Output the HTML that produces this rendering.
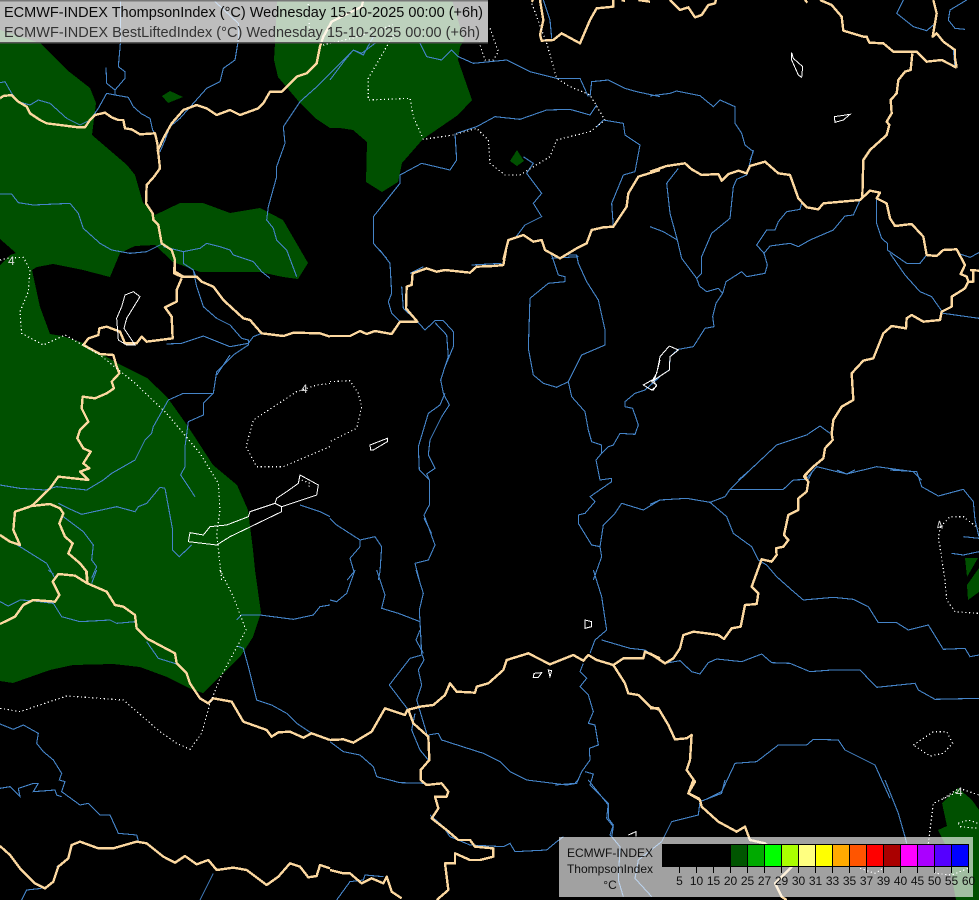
<!DOCTYPE html>
<html><head><meta charset="utf-8"><title>ECMWF-INDEX ThompsonIndex</title>
<style>
html,body{margin:0;padding:0;background:#000;width:979px;height:900px;overflow:hidden}
svg{display:block;position:absolute;left:0;top:0}
path{fill:none;vector-effect:non-scaling-stroke;shape-rendering:crispEdges}
.g path{fill:#005000;stroke:none}
.r path{stroke:#4584c8;stroke-width:1.1}
.b path{stroke:#fcd8a0;stroke-width:2.4;stroke-linejoin:round}
.w path{stroke:#fff;stroke-width:1}
.d path{stroke:#fff;stroke-width:1.2;stroke-dasharray:1.2 2.6}
text{font-family:"Liberation Sans",sans-serif}
.l{font-size:12px;fill:#ddd}
</style></head><body>
<svg width="979" height="900" viewBox="0 0 979 900" xmlns="http://www.w3.org/2000/svg">
<rect width="979" height="900" fill="#000"/>
<g class="g">
<path d="M0,30L40,43L67,70L90,88L96,103L92,135L127,165L135,175L143,203L155,215L180,203L203,203L230,213L260,208L283,220L308,263L298,279L283,277L260,272L200,272L173,262L155,245L135,246L120,253L110,277L83,270L53,264L37,267L32,270L40,307L50,334L62,336L83,343L117,363L147,378L167,397L187,425L213,465L237,485L248,510L253,550L255,570L261,613L253,637L240,657L203,693L193,690L167,677L140,667L113,664L73,665L50,670L13,683L0,681L0,265L10,255L16,253L0,239Z"/>
<path d="M277,0L452,0L464,40L460,47L458,60L472,100L458,115L423,139L402,163L398,182L382,192L366,182L367,142L353,130L340,128L330,128L315,118L300,103L278,77L274,60L275,43Z"/>
<path d="M162,96L170,91L183,97L168,103Z"/>
<path d="M510,161L517,150L524,161L517,166Z"/>
<path d="M965,558L978,558L967,577Z"/>
<path d="M968,600L967,585L979,568L979,592Z"/>
<path d="M958,788L942,803L947,826L938,830L946,846L956,900L979,900L979,810L972,800Z"/>
</g>

<!-- RIVERS -->
<g class="r">
<g transform="translate(0,40) scale(.33333)">
<path d="M0,128L15,125L35,160L55,185L90,195L115,180L150,190L200,235L240,255L270,240L295,205L320,160L345,165L385,172L400,200L425,222L450,235L458,270L470,290"/>
<path d="M318,82L320,130L345,150L375,115L375,95L355,80L362,0L362,-120"/>
<path d="M345,150L345,165"/>
<path d="M640,-120L715,-50L715,0L705,60L670,85L660,125L620,145L580,190L540,235L510,260L495,300L480,335"/>
<path d="M1125,10L1085,40L1060,30L1030,60L945,145L900,185L850,260L855,310L830,380L830,410L805,500L800,540L820,565L830,600L860,630L890,710"/>
<path d="M0,462L35,462L55,488L100,495L210,490L235,520L250,565L300,610L335,630L390,640L440,635L470,620L490,610"/>
<path d="M490,620L550,635L600,625L620,610L660,620L690,630L700,645L760,665L785,695L810,715"/>
<path d="M550,635L550,670L580,690L590,715"/>
</g>
<g transform="translate(0,250) scale(.33333)">
<path d="M500,282L545,280L610,258L690,290L745,280L760,260L785,250"/>
<path d="M580,60L590,110L610,170L650,205L690,225L725,265L745,270L745,285L700,315L650,365L640,430L610,460L610,495L565,515L555,590L555,650L542,675L585,740"/>
<path d="M690,315L650,375"/>
<path d="M640,430L550,430L505,450L460,530L455,550L435,570L405,630L335,670L310,690L260,720L170,710L135,720L60,715L0,705"/>
<path d="M495,715L480,712L440,760L415,770L405,785L350,770L245,793L205,775L175,760"/>
<path d="M495,715L518,840L518,900L538,920L575,885"/>
<path d="M190,800L250,845L280,885L275,930L290,950L275,985"/>
<path d="M0,855L60,890L140,940L165,985"/>
<path d="M900,765L960,785L990,800"/>
</g>
<g transform="translate(0,570) scale(.33333)">
<path d="M0,95L25,108L60,90L95,92L160,100L185,140L240,155L330,150L350,160L405,155"/>
<path d="M440,215L475,265L530,282"/>
<path d="M145,0L160,12M290,0L275,40"/>
<path d="M710,150L725,135L780,135L880,148L940,135L960,110L990,105"/>
<path d="M712,228L730,235L745,290L770,390L815,405L860,430L890,460L935,490"/>
<path d="M0,462L40,478L70,465L115,490L110,520L130,545L160,570L185,610L178,630L195,635L185,665L240,705L265,700L300,735L330,735L355,790L410,795L415,812"/>
<path d="M0,655L30,650L60,680L55,655L100,640L115,640L100,665L165,660L170,675L185,680"/>
<path d="M65,990L80,960L125,955M170,890L195,875M600,990L640,910"/>
</g>
<g transform="translate(330,250) scale(.33333)">
<path d="M150,0L180,40L185,130L175,155L185,190L210,215L262,215L285,240L315,212L340,212L370,245L370,290L345,350L332,390L340,430L358,465L335,500L300,570L295,615L315,655L290,672L298,690L298,765L282,795L315,885L295,930L255,940L268,990"/>
<path d="M215,110L220,175L262,215"/>
<path d="M240,70L280,50M425,45L515,40"/>
<path d="M345,430L330,465L295,490L265,590L268,660L298,690"/>
<path d="M315,218L350,255L355,320L345,350"/>
<path d="M282,805L305,850"/>
<path d="M0,805L20,825L90,870L135,860L155,890L150,965L145,990"/>
<path d="M90,870L90,890L60,925L72,965L52,990"/>
<path d="M665,15L685,75L705,80L705,95L655,100L600,145L595,295L610,375L640,400L680,412L715,395L755,315L825,285L825,240L805,150L770,95L745,40L740,15L715,15"/>
<path d="M715,395L725,440L765,485L775,540L785,575L815,585L815,610L798,630L810,690L845,685L845,695L780,740L795,755L765,790L745,795L745,820L785,885L810,890L815,920L790,990"/>
<path d="M815,610L835,590L850,585L870,550L915,553L925,525L908,475L885,470L885,455L915,430L945,420L990,380"/>
<path d="M810,890L820,825L855,790L875,760L940,780L990,750"/>
</g>
<g transform="translate(650,150) scale(.33333)">
<path d="M85,598L130,590L165,535L192,530L188,500L198,460L218,430L228,395L275,365L290,380L345,370L352,345L342,310L320,285L350,240L375,240L385,215L410,185L450,178L455,160"/>
<path d="M342,310L360,288L420,280L445,290L480,270L550,240L585,198L610,195L635,140"/>
<path d="M218,430L205,415L170,425L148,408L140,385L155,370L155,320L185,250L240,205L250,110L260,88L290,75L310,0"/>
<path d="M140,385L95,325L82,270L60,190L50,100L85,55"/>
<path d="M0,230L40,245L82,270"/>
<path d="M680,140L680,220L695,265L712,280L712,300L770,340L810,340L830,315"/>
<path d="M720,310L765,375L810,425L845,440L880,490L987,505"/>
<path d="M925,310L960,322L987,308"/>
<path d="M265,990L300,960L380,885L470,855L510,828L540,850"/>
<path d="M470,985L500,950L590,972L680,950L790,965L815,990"/>
<path d="M85,598L60,620L58,660L5,695"/>
</g>
<g transform="translate(330,0) scale(.33333)">
<path d="M640,0L660,60L665,115"/>
<path d="M0,240L45,180L70,150L100,165L130,110"/>
<path d="M270,130L290,170L335,180L365,150L385,170L430,190L530,180L600,215L680,235L750,235L775,290"/>
<path d="M780,290L785,245L835,240L885,265L920,275L990,290"/>
<path d="M380,400L440,380L495,350L570,358L650,330L720,328L780,345L800,315"/>
<path d="M800,380L820,360L880,370L885,405L930,435L915,515L880,525L845,610L850,680"/>
<path d="M375,400L380,480L360,510L275,490L210,525L210,550L130,650L130,730L170,775"/>
<path d="M580,470L610,490L590,520L635,580L610,610L635,650L585,675L555,715"/>
<path d="M665,775L745,770"/>
</g>
<g transform="translate(650,470) scale(.33333)">
<path d="M0,103L30,90L110,85L180,97L225,80L240,58L300,0"/>
<path d="M240,58L400,58L430,30L475,28L490,0"/>
<path d="M180,97L230,140L250,190L305,230L325,270L350,285L380,320L425,360L460,390L550,382L610,388L655,410L685,458L740,458L775,480L835,465L880,538L945,535L960,560L987,555"/>
<path d="M560,0L590,12L615,0"/>
<path d="M720,0L800,5L815,50L865,78L940,58L970,95L975,150L987,200"/>
<path d="M940,200L987,205M905,250L940,255L987,245"/>
<path d="M0,550L45,580L90,572L125,605L150,612L175,578L200,567L275,575L335,552L365,578L420,580L480,605L545,600L630,600L680,652L795,640L805,660L855,688L987,685"/>
<path d="M170,987L215,965L255,880L320,875L385,825L470,825L490,808L565,810L585,840L675,885L720,985"/>
</g>
<g transform="translate(555,780) scale(.33333)">
<path d="M100,0L160,75L160,115L175,135L165,165L170,170L195,200L190,300L205,350"/>
<path d="M290,350L240,295L250,240L320,185L350,125L430,105L435,65L500,40L510,0"/>
<path d="M990,0L1030,100L1050,170L1055,190"/>
<path d="M0,15L60,10L68,0"/>
</g>
<g transform="translate(330,570) scale(.33333)">
<path d="M75,0L50,70L20,95L0,90"/>
<path d="M140,0L165,75L155,115L205,130L270,155L275,250L282,270L265,300L275,345L260,390L290,490"/>
<path d="M258,0L280,70L268,120L270,155"/>
<path d="M270,180L258,210L280,250"/>
<path d="M275,255L240,265L178,345L235,420"/>
<path d="M255,430L245,480L270,540L295,570"/>
<path d="M295,495L325,490L335,510L460,550L510,575L540,605L590,630L710,645L740,640L755,605L780,570L778,535L805,525L795,465L775,460L790,425L775,375L750,350L770,325L750,305L760,280"/>
<path d="M790,0L815,80L830,180L795,210L780,250"/>
<path d="M815,210L900,235L945,240L990,270"/>
<path d="M765,605L790,612L780,645L835,700L830,745L850,770L845,800"/>
<path d="M0,515L40,545L90,555L130,590L140,620L210,638L290,640"/>
<path d="M300,735L340,770L360,800L420,825L520,830L540,820L555,845L650,840L680,815L700,800"/>
<path d="M20,990L60,935L100,930L105,915L160,920"/>
</g>
<g transform="translate(650,0) scale(.33333)">
<path d="M0,288L60,280L80,273L150,287L190,320L210,300L255,320L255,370L275,400L285,435L310,455L300,480"/>
<path d="M760,0L740,40L790,80L830,92L850,75L850,110"/>
<path d="M950,0L900,30L895,60L915,85L945,88"/>
<path d="M880,125L910,150L915,200"/>
</g>
</g>

<!-- BORDERS -->
<g class="b">
<g transform="translate(0,40) scale(.33333)">
<path d="M0,175L10,168L35,165L55,185L80,200L90,220L120,240L140,250L180,255L235,262L255,262L270,240L285,225L315,218L335,232L355,240L370,240L375,265L395,268L420,283L465,280L472,310L475,340L480,385L462,410L440,435L438,490L458,520L460,540L475,555L485,610L515,630L525,660L525,695L550,710L590,710"/>
<path d="M472,335L490,295L515,250L550,210L590,195L620,205L650,225L690,210L720,225L775,205L790,190L810,155L845,155L890,110L920,100L950,70L960,20L970,-10L995,-55L1085,-100L1090,-120"/>
</g>
<g transform="translate(0,250) scale(.33333)">
<path d="M515,0L525,30L522,70L545,80L590,80L605,95L640,110L670,150L730,205L750,210L785,250L850,258L880,248L960,250L990,260"/>
<path d="M545,85L530,120L530,155L495,172L515,200L518,265L440,275L425,260L410,280L375,280L360,245L320,230L298,235L295,255L265,265L250,285L300,312L340,315L350,350L358,370L335,395L342,415L320,430L285,445L248,440L245,475L265,515L240,540L232,565L250,595L272,605L250,640L268,655L240,665L265,690L175,680L150,715L95,768L45,785L40,840L60,885L30,875L0,855"/>
<path d="M95,768L150,762L180,775L190,790L178,820L195,860L218,880L205,910L240,940L260,965L262,990"/>
</g>
<g transform="translate(0,570) scale(.33333)">
<path d="M258,0L262,40L320,65L345,105L370,110L405,135L410,175L440,205L525,250L530,280L560,310L570,340L600,385L625,400L640,385L695,395L730,455L800,480L815,500L835,487L870,485L910,503L935,490L990,510"/>
<path d="M262,40L225,17L175,12L158,35L178,75L165,95L100,90L70,105L45,140L0,162"/>
<path d="M0,828L30,855L60,895L105,940L135,955L160,935L175,890L205,865L215,825L240,815L295,835L340,835L410,815L440,820L490,860L525,878L555,858L590,883L625,870L650,900L700,893L740,900L800,945L835,920L870,880L900,890L925,922L950,918L960,885L990,895"/>
</g>
<g transform="translate(330,250) scale(.33333)">
<path d="M0,258L60,258L90,243L110,252L135,243L185,252L210,215L262,215L228,175L230,110L245,105L248,70L290,55L320,65L345,60L420,68L440,50L490,48L520,45L528,0"/>
</g>
<g transform="translate(650,150) scale(.33333)">
<path d="M0,65L50,48L105,40L125,58L155,75L205,72L215,92L235,72L265,62L290,70L300,48L345,35L385,70L420,75L445,145L470,172L505,178L520,160L630,150L660,122L690,128L680,145L710,160L720,205L735,228L785,222L820,260L830,315L860,318L880,300L920,298L945,345L932,372L950,380L955,395L945,415L905,440L905,470L875,485L870,510L820,515L785,495L770,505L768,535L725,528L700,550L670,625L640,632L605,670L610,750L575,770L550,810L545,850L548,870L525,895L520,925L490,950L465,975L470,990"/>
<path d="M637,140L640,30L660,0"/>
<path d="M960,360L987,362M970,360L970,395L955,395"/>
</g>
<g transform="translate(650,0) scale(.33333)">
<path d="M640,480L660,450L710,405L718,375L710,365L725,340L722,300L740,280L745,240L765,215L782,210L787,160"/>
<path d="M510,0L545,15L575,50L580,92L640,110L650,110L658,128L700,130L730,155L800,155L830,185L875,180L920,203"/>
<path d="M850,0L860,40L848,110L860,100L880,125L915,150L915,175L920,203"/>
<path d="M60,0L90,30L115,22L135,52L155,45L175,15L195,10L198,0"/>
<path d="M465,0L472,8"/>
</g>
<g transform="translate(330,0) scale(.33333)">
<path d="M630,0L640,60L630,105L635,122L670,120L695,100L750,130L780,60L800,25L850,20L850,0"/>
<path d="M605,0L610,5M875,0L885,3M925,0L960,5"/>
<path d="M520,780L535,720L580,705L610,725L635,720L645,750L690,775L740,745L770,730L785,690L820,682L850,680L890,620L895,580L925,530L990,510"/>
</g>
<g transform="translate(650,470) scale(.33333)">
<path d="M480,0L462,20L475,35L470,65L445,85L445,120L415,135L402,195L415,210L400,230L378,235L380,255L365,275L335,268L325,295L305,350L325,370L320,402L285,405L272,470L245,475L222,507L205,495L170,490L130,485L100,495L90,535L70,565L45,580L0,550"/>
<path d="M0,715L25,715L55,765L75,808L110,805L125,795L120,870L110,900L135,935L115,970L150,987"/>
</g>
<g transform="translate(555,780) scale(.33333)">
<path d="M415,0L400,40L435,60L440,80L490,125L545,155L570,140L585,180L630,190L710,260L660,310L680,350L695,360"/>
</g>
<g transform="translate(330,570) scale(.33333)">
<path d="M0,510L40,508L70,518L125,485L165,415L225,435L232,420L270,410L310,405L345,375L360,340L380,365L435,368L440,350L475,340L520,300L530,270L595,250L660,283L730,255L760,272L775,255L800,270L850,285L880,265L940,265L945,245L990,265"/>
<path d="M850,285L885,340L895,370L925,375L960,410L990,420"/>
<path d="M235,420L250,460L295,500L298,570L272,600L272,630L290,645L335,640L355,665L350,680L315,680L325,715L305,745L350,780L385,810L420,810L435,830L490,835L490,860L450,870L420,870L375,850L375,880L345,880L355,960L320,990"/>
<path d="M0,900L40,910L60,910L95,940L125,925L160,940L170,920L185,965L215,985"/>
</g>
</g>

<!-- LAKES -->
<g class="w">
<g transform="translate(0,250) scale(.33333)">
<path d="M400,125L375,135L365,170L350,205L355,270L380,285L405,285L372,235L380,205L420,140Z"/>
<path d="M900,675L895,700L860,725L830,745L825,760L750,785L745,800L680,825L630,830L610,855L570,848L565,875L650,885L690,860L845,785L845,770L950,735L955,705Z"/>
<path d="M825,760L845,770"/>
</g>
<g transform="translate(330,250) scale(.33333)">
<path d="M120,585L172,565L172,575L130,600L122,600Z"/>
<path d="M990,330L985,350L975,385L940,405L965,420L980,408L970,390"/>
</g>
<g transform="translate(650,150) scale(.33333)">
<path d="M58,588L30,620L20,670L5,695L20,705L10,720L0,718M58,588L85,600L60,620L58,660L5,695"/>
</g>
<g transform="translate(330,570) scale(.33333)">
<path d="M765,150L785,155L785,170L765,175Z"/>
<path d="M612,310L635,308L625,322L610,322Z"/>
<path d="M655,300L665,302L660,320Z"/>
<path d="M895,795L918,785L918,800"/>
</g>
<g transform="translate(650,0) scale(.33333)">
<path d="M425,158L430,175L458,200L455,232L445,225L425,180Z"/>
<path d="M553,350L600,343L580,360L555,367Z"/>
</g>
</g>

<!-- DOTTED CONTOURS -->
<g class="d">
<g transform="translate(0,250) scale(.33333)">
<path d="M0,30L20,25L70,22L90,60L85,125L60,185L65,250L130,285L195,255L300,315L400,395L500,490L600,610L655,700L660,780L650,850L665,990"/>
<path d="M990,400L950,405L890,425L760,510L738,590L770,650L850,650L990,590"/>
<path d="M905,690L930,700L925,715"/>
</g>
<g transform="translate(330,250) scale(.33333)">
<path d="M0,395L60,392L85,430L95,470L80,535L0,575"/>
</g>
<g transform="translate(0,570) scale(.33333)">
<path d="M660,0L700,80L738,180L660,325L630,400L605,490L570,538L530,520L480,485L370,390L200,378L60,425L0,415"/>
</g>
<g transform="translate(330,0) scale(.33333)">
<path d="M190,105L115,235L115,300L240,295L250,350L280,418L370,405L440,385L475,420L480,490L525,525L570,525L660,470L680,420L780,395L825,360L780,285L720,260L680,235L650,130L605,10"/>
<path d="M480,85L505,155L490,180L465,180L445,120"/>
</g>
<path d="M323,45L353,38L393,25M308,0L310,40" style="stroke:#fff;stroke-width:1.2;stroke-dasharray:1.2 2.6"/>
<g transform="translate(650,470) scale(.33333)">
<path d="M872,170L900,140L940,140L985,175"/>
<path d="M872,170L865,200L885,330L890,390L915,425L987,430"/>
<path d="M790,825L850,785L890,785L908,820L880,850L840,858Z"/>
<path d="M880,985L928,955L987,975"/>
</g>
<g transform="translate(555,780) scale(.33333)">
<path d="M1120,190L1135,70L1210,35"/>
<path d="M1210,130L1240,120L1270,130M1210,130L1215,140L1270,145"/>
<path d="M915,265L960,280L985,265"/>
<path d="M1140,265L1140,280L1190,285L1240,265"/>
</g>
</g>
<text class="l" x="8" y="265">4</text>
<text class="l" x="301" y="393">4</text>
<text class="l" x="956" y="796">4</text>
<text class="l" transform="translate(941,529) rotate(-20)" text-anchor="middle">4</text>

<!-- TITLE BOX -->
<rect x="0" y="1" width="488" height="42" fill="#fff" fill-opacity=".74"/>
<rect x="0" y="0" width="488" height="1.5" fill="#777"/>
<rect x="0" y="42" width="488" height="1.5" fill="#555"/>
<text x="4" y="17" font-size="14.5" fill="#0a0a0a" textLength="479" lengthAdjust="spacing">ECMWF-INDEX ThompsonIndex (°C) Wednesday 15-10-2025 00:00 (+6h)</text>
<text x="4" y="37" font-size="14.5" fill="#333" textLength="476" lengthAdjust="spacing">ECMWF-INDEX BestLiftedIndex (°C) Wednesday 15-10-2025 00:00 (+6h)</text>

<!-- LEGEND -->
<rect x="559" y="837" width="414" height="60" fill="#fff" fill-opacity=".63"/>
<text x="610" y="857" font-size="12" fill="#111" text-anchor="middle">ECMWF-INDEX</text>
<text x="610" y="873" font-size="12" fill="#111" text-anchor="middle">ThompsonIndex</text>
<text x="610" y="889" font-size="12" fill="#111" text-anchor="middle">°C</text>
<g stroke="#000" stroke-width="1" shape-rendering="crispEdges">
<rect x="662.5" y="844.5" width="17" height="22" fill="#000"/>
<rect x="679.5" y="844.5" width="17" height="22" fill="#000"/>
<rect x="696.5" y="844.5" width="17" height="22" fill="#000"/>
<rect x="713.5" y="844.5" width="17" height="22" fill="#000"/>
<rect x="730.5" y="844.5" width="17" height="22" fill="#005500"/>
<rect x="747.5" y="844.5" width="17" height="22" fill="#00aa00"/>
<rect x="764.5" y="844.5" width="17" height="22" fill="#00ff00"/>
<rect x="781.5" y="844.5" width="17" height="22" fill="#aaff00"/>
<rect x="798.5" y="844.5" width="17" height="22" fill="#ffff80"/>
<rect x="815.5" y="844.5" width="17" height="22" fill="#ffff00"/>
<rect x="832.5" y="844.5" width="17" height="22" fill="#ffaa00"/>
<rect x="849.5" y="844.5" width="17" height="22" fill="#ff5500"/>
<rect x="866.5" y="844.5" width="17" height="22" fill="#ff0000"/>
<rect x="883.5" y="844.5" width="17" height="22" fill="#aa0000"/>
<rect x="900.5" y="844.5" width="17" height="22" fill="#ff00ff"/>
<rect x="917.5" y="844.5" width="17" height="22" fill="#aa00ff"/>
<rect x="934.5" y="844.5" width="17" height="22" fill="#5500ff"/>
<rect x="951.5" y="844.5" width="17" height="22" fill="#0000ff"/>
<path style="stroke:#000;stroke-width:1" d="M679.5,867V873M696.5,867V873M713.5,867V873M730.5,867V873M747.5,867V873M764.5,867V873M781.5,867V873M798.5,867V873M815.5,867V873M832.5,867V873M849.5,867V873M866.5,867V873M883.5,867V873M900.5,867V873M917.5,867V873M934.5,867V873M951.5,867V873M968.5,867V873"/>
</g>
<g font-size="12" fill="#111" text-anchor="middle">
<text x="679.5" y="885">5</text><text x="696.5" y="885">10</text><text x="713.5" y="885">15</text><text x="730.5" y="885">20</text><text x="747.5" y="885">25</text><text x="764.5" y="885">27</text><text x="781.5" y="885">29</text><text x="798.5" y="885">30</text><text x="815.5" y="885">31</text><text x="832.5" y="885">33</text><text x="849.5" y="885">35</text><text x="866.5" y="885">37</text><text x="883.5" y="885">39</text><text x="900.5" y="885">40</text><text x="917.5" y="885">45</text><text x="934.5" y="885">50</text><text x="951.5" y="885">55</text><text x="968.5" y="885">60</text>
</g>
</svg>
</body></html>
